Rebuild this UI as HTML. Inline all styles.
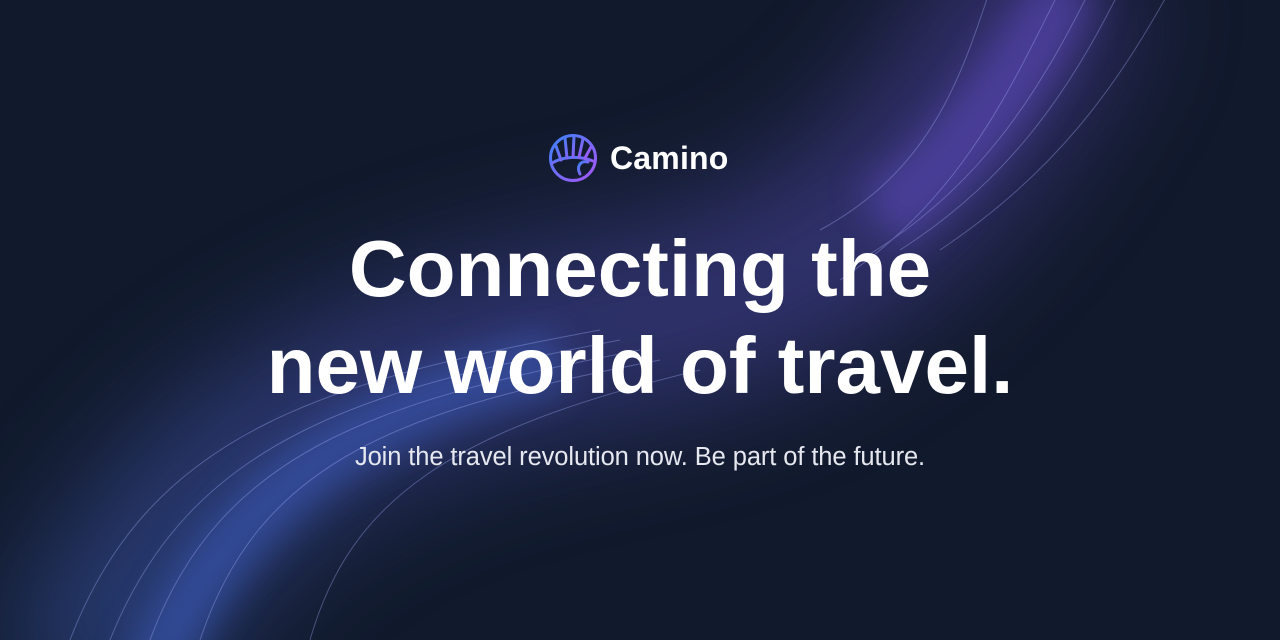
<!DOCTYPE html>
<html><head><meta charset="utf-8"><style>
html,body{margin:0;padding:0;width:1280px;height:640px;overflow:hidden}
body{background:#111a2c;position:relative;font-family:"Liberation Sans",sans-serif;color:#fff}
svg.bg{position:absolute;left:0;top:0;display:block}
.logo{position:absolute;left:548px;top:133px;display:flex;align-items:center}
.logo span{font-size:32px;font-weight:600;margin-left:12px;letter-spacing:0.2px}
h1{position:absolute;left:0;right:0;top:220px;margin:0;text-align:center;font-size:80px;line-height:97px;font-weight:700;letter-spacing:0}
p{position:absolute;left:0;right:0;top:443px;margin:0;text-align:center;font-size:25.5px;color:#e6e8f0;letter-spacing:-0.1px}
</style></head><body>
<svg class="bg" width="1280" height="640" viewBox="0 0 1280 640">
<defs>
<filter id="b1" x="-50%" y="-50%" width="200%" height="200%"><feGaussianBlur stdDeviation="55"/></filter>
<filter id="b2" x="-50%" y="-50%" width="200%" height="200%"><feGaussianBlur stdDeviation="18"/></filter>
<linearGradient id="g" x1="0" y1="1" x2="1" y2="0">
<stop offset="0" stop-color="#3a5bb0"/><stop offset="0.5" stop-color="#4a4aa8"/><stop offset="1" stop-color="#5a44b0"/></linearGradient>
</defs>
<path d="M80 700 C 200 420, 420 360, 640 320 C 860 280, 960 150, 1060 -40" stroke="url(#g)" stroke-width="190" fill="none" opacity="0.5" filter="url(#b1)"/>
<path d="M150 680 C 240 470, 400 400, 560 360" stroke="#3a5ab8" stroke-width="60" fill="none" opacity="0.6" filter="url(#b2)"/>
<path d="M880 220 C 960 160, 1020 80, 1070 -20" stroke="#5a48b8" stroke-width="70" fill="none" opacity="0.6" filter="url(#b2)"/>
<g fill="none" stroke="#a8b4ff" stroke-width="1" opacity="0.35">
<path d="M70 640 C 150 430, 330 380, 600 330"/>
<path d="M110 640 C 190 440, 360 390, 620 340"/>
<path d="M150 640 C 220 450, 380 400, 640 350"/>
<path d="M200 640 C 260 460, 400 410, 660 360"/>
<path d="M310 640 C 350 500, 450 430, 700 370"/>
<path d="M840 280 C 960 200, 1010 90, 1060 -10"/>
<path d="M860 260 C 980 190, 1040 90, 1090 -10"/>
<path d="M900 250 C 1010 180, 1070 90, 1120 -10"/>
<path d="M940 250 C 1060 170, 1120 80, 1170 -10"/>
<path d="M820 230 C 930 170, 960 80, 990 -10"/>
</g>
</svg>
<div class="logo">
<svg width="50" height="50" viewBox="0 0 50 50">
<defs><linearGradient id="lg" x1="0" y1="0" x2="1" y2="1"><stop offset="0" stop-color="#3b82f6"/><stop offset="1" stop-color="#a855f7"/></linearGradient></defs>
<g fill="none" stroke="url(#lg)" stroke-width="3" stroke-linecap="round">
<circle cx="25" cy="25" r="22.5"/>
<path d="M4 30 C 14 24, 30 22, 45 28"/>
<path d="M13 27 L8 13 M19 25 L17 5 M25 24 L26 3 M31 24 L35 6 M37 25 L43 14"/>
<path d="M40 29 C 33 27, 28 33, 32 41"/>
</g></svg>
<span>Camino</span></div>
<h1>Connecting the<br>new world of travel.</h1>
<p>Join the travel revolution now. Be part of the future.</p>
</body></html>
